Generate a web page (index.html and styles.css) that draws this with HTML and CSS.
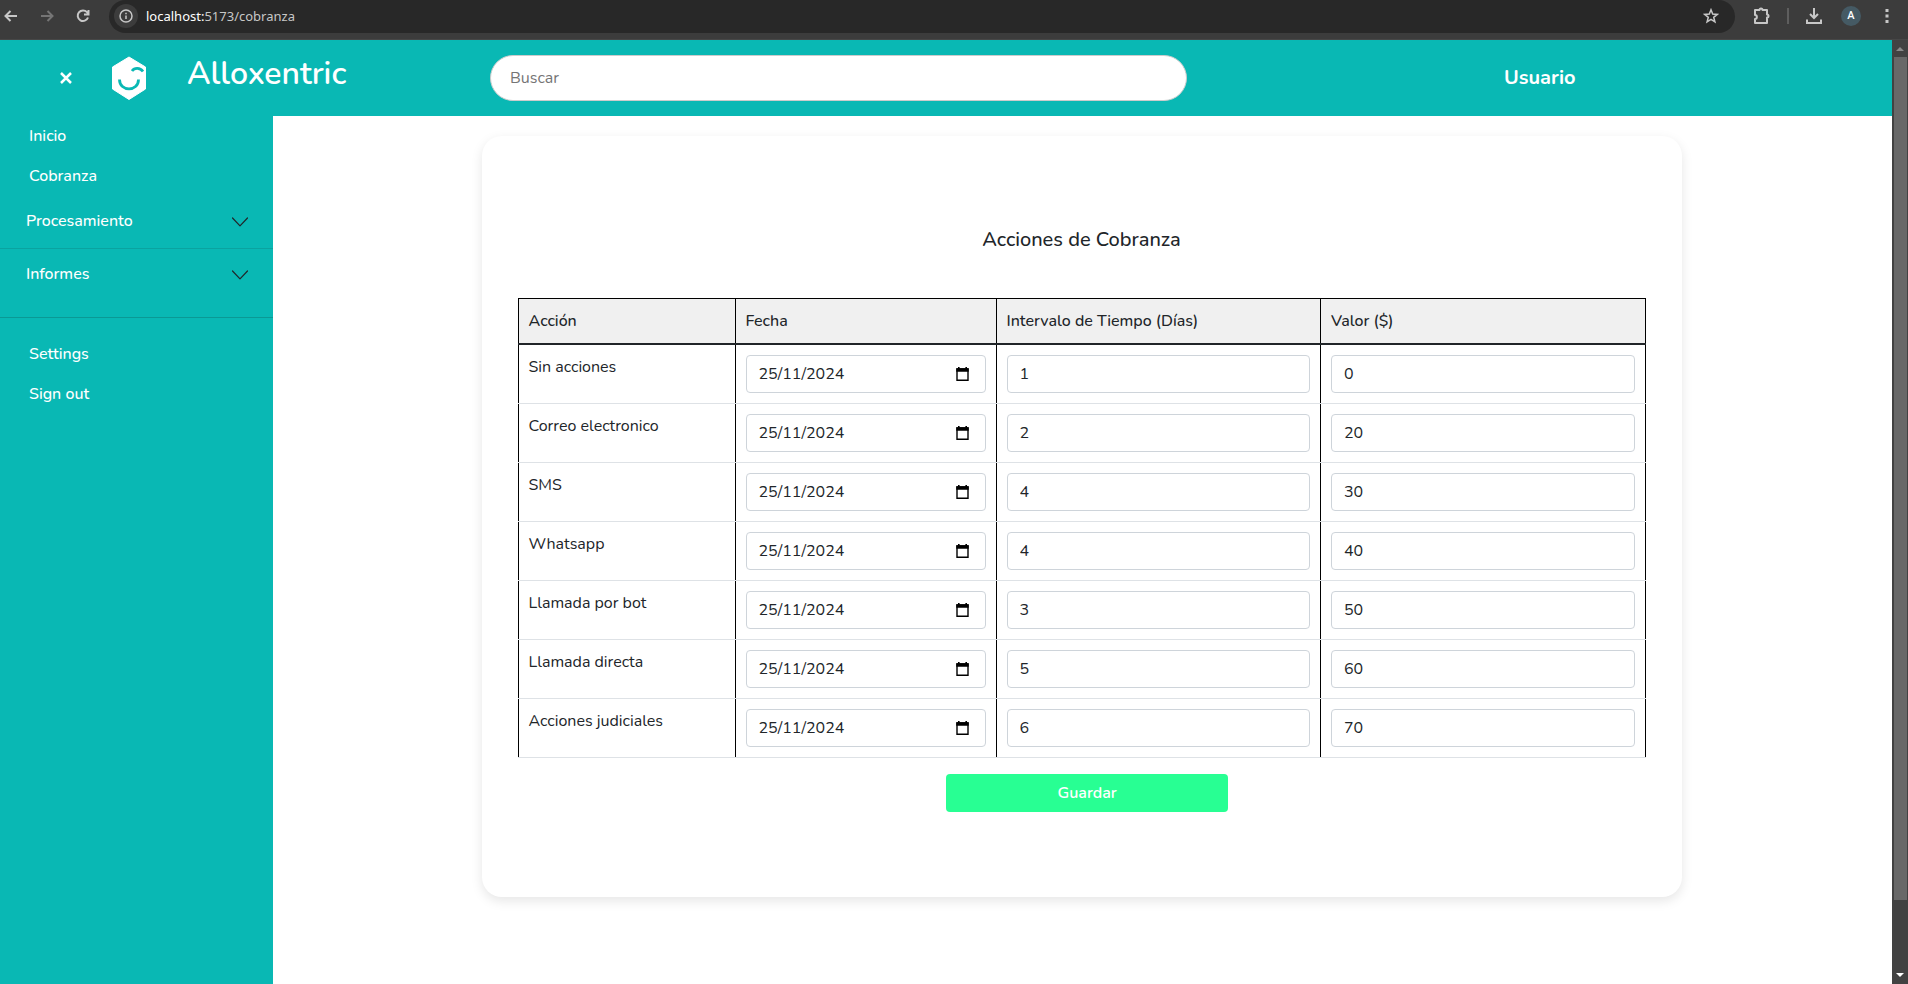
FILE: index.html
```html
<!DOCTYPE html>
<html lang="es">
<head>
<meta charset="utf-8">
<title>Alloxentric - Cobranza</title>
<link rel="stylesheet" href="styles.css">
</head>
<body>
<svg class="sprite" aria-hidden="true">
  <symbol id="calendar" viewBox="0 0 13 14"><path d="M1 2h11v11.300H1z" fill="none" stroke="#000" stroke-width="1.400"/><path d="M.3 1.300h12.400v3.500H.3zM2 0h1.600v2H2zM9.400 0H11v2H9.400z"/></symbol>
  <symbol id="chevron" viewBox="0 0 16 16"><path d="M.5 4 8 11.800 15.500 4" fill="none" stroke="#212529" stroke-width="1.200" stroke-linecap="round" stroke-linejoin="round"/></symbol>
</svg>
<div class="toolbar">
  <button class="tool back" aria-label="Atrás"><svg width="14" height="12" viewBox="0 0 14 12"><path d="M13 6H2M6.500 1 1.500 6l5 5"/></svg></button>
  <button class="tool forward" aria-label="Adelante"><svg width="14" height="12" viewBox="0 0 14 12"><path d="M1 6h11M7.500 1l5 5-5 5"/></svg></button>
  <button class="tool reload" aria-label="Recargar"><svg width="14" height="14" viewBox="0 0 14 14"><path d="M12 8.500A5.300 5.300 0 1 1 11 3.200L12.500 5M12.500 1v4.500H8"/></svg></button>
  <div class="address">
    <button class="info" aria-label="Información del sitio"><svg width="14" height="14" viewBox="0 0 14 14"><circle cx="7" cy="7" r="6"/><path d="M7 6.500V10M7 3.700v1.500"/></svg></button>
    <span class="url"><b>localhost:</b>5173/cobranza</span>
    <button class="star" aria-label="Favorito"><svg width="16" height="16" viewBox="0 0 16 16"><path d="M8 1.800l1.700 4.300 4.500.3-3.500 2.900 1.200 4.500L8 11.300l-3.900 2.500 1.200-4.500L1.800 6.400l4.500-.3z"/></svg></button>
  </div>
  <div class="actions">
    <button class="tool" aria-label="Extensiones"><svg width="18" height="18" viewBox="0 0 18 18"><path d="M2 3h4.500c0-2 3-2 3 0H14v4.500c2 0 2 3 0 3V16H2v-4c2.500 0 2.500-4 0-4z" stroke-linejoin="round"/></svg></button>
    <span class="rule"></span>
    <button class="tool" aria-label="Descargas"><svg width="18" height="18" viewBox="0 0 18 18"><path d="M9 1v9.500M5 7l4 4 4-4M2 12.500V16h14v-3.500"/></svg></button>
    <button class="avatar">A</button>
    <button class="tool menu" aria-label="Menú"><svg width="4" height="16" viewBox="0 0 4 16"><path class="dots" d="M.5 1h3v3h-3zM.5 6.500h3v3h-3zM.5 12h3v3h-3z"/></svg></button>
  </div>
</div>
<div class="viewport">
  <div class="page">
    <header class="header">
      <button class="close" aria-label="Cerrar menú"><svg width="12" height="12" viewBox="0 0 12 12"><path d="M1 1l10 10M11 1L1 11"/></svg></button>
      <svg class="logo" width="34" height="44" viewBox="0 0 34 44"><path d="M17 1 33.500 11v22L17 43.500.5 33V11z" fill="#fff" stroke="#fff" stroke-linejoin="round"/><path d="M7.500 23.500c0 12.500 19 12.500 19 0M20 15c2.500-3.500 8-3.500 11 .5" fill="none" stroke="#09b8b4" stroke-width="2.800"/></svg>
      <h1 class="brand">Alloxentric</h1>
      <input class="search" type="search" placeholder="Buscar" aria-label="Buscar">
      <span class="user">Usuario</span>
    </header>
    <div class="body">
      <nav class="sidebar">
        <a href="#inicio">Inicio</a>
        <a href="#cobranza">Cobranza</a>
        <button class="group">Procesamiento<svg width="16" height="16"><use href="#chevron"/></svg></button>
        <button class="group last">Informes<svg width="16" height="16"><use href="#chevron"/></svg></button>
        <div class="account">
          <a href="#settings">Settings</a>
          <a href="#signout">Sign out</a>
        </div>
      </nav>
      <main class="main">
        <form class="card">
          <h2 class="title">Acciones de Cobranza</h2>
          <table class="table">
            <colgroup><col class="c1"><col class="c2"><col class="c3"><col class="c3"></colgroup>
            <thead><tr><th>Acción</th><th>Fecha</th><th>Intervalo de Tiempo (Días)</th><th>Valor ($)</th></tr></thead>
            <tbody id="rows"></tbody>
          </table>
          <button class="save" type="button">Guardar</button>
        </form>
      </main>
    </div>
  </div>
  <div class="scrollbar"><span class="up"></span><span class="thumb"></span><span class="down"></span></div>
</div>
<script src="app.js"></script>
</body>
</html>
```
FILE: styles.css
```css
*, *::before, *::after { box-sizing: border-box; }
body {
  margin: 0;
  height: 100vh;
  display: flex;
  flex-direction: column;
  overflow: hidden;
  background: #fff;
  color: #212529;
  font: 16px/24px Nunito, Lato, sans-serif;
}
button, input { font: inherit; color: inherit; }
button { border: 0; padding: 0; background: none; cursor: pointer; }
svg { display: block; }
.sprite { position: absolute; width: 0; height: 0; }

.toolbar {
  display: flex;
  align-items: flex-start;
  flex: none;
  height: 40px;
  padding-left: 4px;
  background: #3c3c3c;
  border-bottom: 1px solid #474747;
}
.tool, .info, .star { display: grid; place-items: center; height: 32px; }
.toolbar svg { fill: none; stroke: #c7c7c7; stroke-width: 2; }
.toolbar .dots { fill: #c7c7c7; stroke: none; }
.back { width: 14px; }
.forward { width: 14px; margin-left: 22px; }
.toolbar .forward svg { stroke: #757575; }
.reload { width: 14px; margin-left: 22px; }
.address {
  display: flex;
  align-items: center;
  flex: 1;
  height: 33px;
  margin-left: 19px;
  padding: 0 16px 1px 5px;
  border-radius: 17px;
  background: #282828;
}
.info { width: 24px; height: 24px; border-radius: 50%; background: #3c3c3c; }
.toolbar .info svg, .toolbar .star svg { stroke-width: 1.5; }
.url { flex: 1; margin-left: 8px; color: #c7c7c7; font: 13px/20px "Noto Sans", sans-serif; }
.url b { color: #fff; font-weight: 400; }
.actions { display: flex; align-items: center; gap: 16px; height: 32px; padding: 0 19px 0 18px; }
.rule { width: 2px; height: 16px; background: #5e5e5e; }
.avatar { width: 20px; height: 20px; margin: 0 8px 0 2px; border-radius: 50%; background: #455a64; color: #fff; font: 500 11px/20px Roboto, sans-serif; }

.viewport { display: flex; flex: 1; min-height: 0; }
.page { display: flex; flex-direction: column; flex: 1; min-width: 0; }
.header { display: flex; align-items: center; flex: none; height: 76px; background: #09b8b4; color: #fff; }
.close { margin-left: 60px; }
.close svg { fill: none; stroke: #fff; stroke-width: 2.5; }
.logo { flex: none; margin-left: 40px; }
.brand { width: 303px; margin: 0 0 8px 41px; font-size: 32px; line-height: 40px; font-weight: 600; }
.search {
  width: 697px;
  height: 46px;
  padding: 0 20px 0 19px;
  border: 1px solid #ccc;
  border-radius: 23px;
  background: #fff;
  outline: 0;
}
.search::placeholder { color: #757575; }
.user { margin-left: 317px; font-size: 20px; font-weight: 700; }

.body { display: flex; flex: 1; min-height: 0; }
.sidebar { width: 273px; flex: none; background: #09b8b4; color: #fff; }
.sidebar a { display: block; height: 40px; padding: 8px 29px; color: inherit; text-decoration: none; font-weight: 500; }
.group {
  display: flex;
  justify-content: space-between;
  align-items: flex-start;
  width: 100%;
  height: 53px;
  padding: 13px 25px 0 26px;
  border-bottom: 1px solid #0aa3a0;
  font-weight: 500;
}
.group svg { margin-top: 5px; }
.group.last { height: 69px; border-color: #0a9995; }
.account { padding-top: 16px; }

.main { display: flex; justify-content: center; align-items: flex-start; flex: 1; padding: 20px 2px 0 0; }
.card {
  width: 1200px;
  max-width: 100%;
  padding: 90px 36px 85px;
  border-radius: 20px;
  box-shadow: 0 4px 12px rgba(0, 0, 0, .1);
}
.title { margin: 0 0 44px; text-align: center; font-size: 20px; line-height: 28px; font-weight: 500; }
.table { width: 100%; table-layout: fixed; border-collapse: collapse; border: 1px solid #000; border-bottom-color: #dee2e6; }
.c1 { width: 217px; }
.c2 { width: 261px; }
.table th { height: 45px; padding: 0 10px; background: #f0f0f0; border: 1px solid #000; border-bottom: 2px solid #212529; text-align: left; font-weight: 500; }
.table td { padding: 10px; border: 1px solid #000; border-top-color: #dee2e6; border-bottom-color: #dee2e6; vertical-align: top; }
.table tbody tr:first-child td { border-top: 2px solid #212529; }
.field { position: relative; }
.field input { display: block; width: 100%; height: 38px; padding: 0 12px; border: 1px solid #ced4da; border-radius: 4px; background: #fff; outline: 0; }
.field svg { position: absolute; right: 17px; top: 12px; }
.save {
  display: block;
  width: 25%;
  height: 38px;
  margin: 16px 0 0 38%;
  border-radius: 4px;
  background: #28ff93;
  color: #fff;
  font-weight: 600;
}

.scrollbar { display: flex; flex-direction: column; align-items: center; width: 16px; background: #424242; }
.up, .down { border: 4px solid transparent; }
.up { margin: 3px 0 6px; border-bottom-color: #8a8a8a; }
.thumb { width: 13px; flex: 1; margin-bottom: 73px; background: #686868; }
.down { margin-bottom: 3px; border-top-color: #fff; }
```
FILE: app.js
```js
const rows = [
  ['Sin acciones', 1, 0],
  ['Correo electronico', 2, 20],
  ['SMS', 4, 30],
  ['Whatsapp', 4, 40],
  ['Llamada por bot', 3, 50],
  ['Llamada directa', 5, 60],
  ['Acciones judiciales', 6, 70]
];
document.getElementById('rows').innerHTML = rows.map(([name, days, value]) => `
  <tr>
    <td>${name}</td>
    <td><div class="field"><input type="text" value="25/11/2024" aria-label="Fecha: ${name}"><svg width="13" height="14"><use href="#calendar"/></svg></div></td>
    <td><div class="field"><input type="number" value="${days}" aria-label="Intervalo: ${name}"></div></td>
    <td><div class="field"><input type="number" value="${value}" aria-label="Valor: ${name}"></div></td>
  </tr>`).join('');
```
